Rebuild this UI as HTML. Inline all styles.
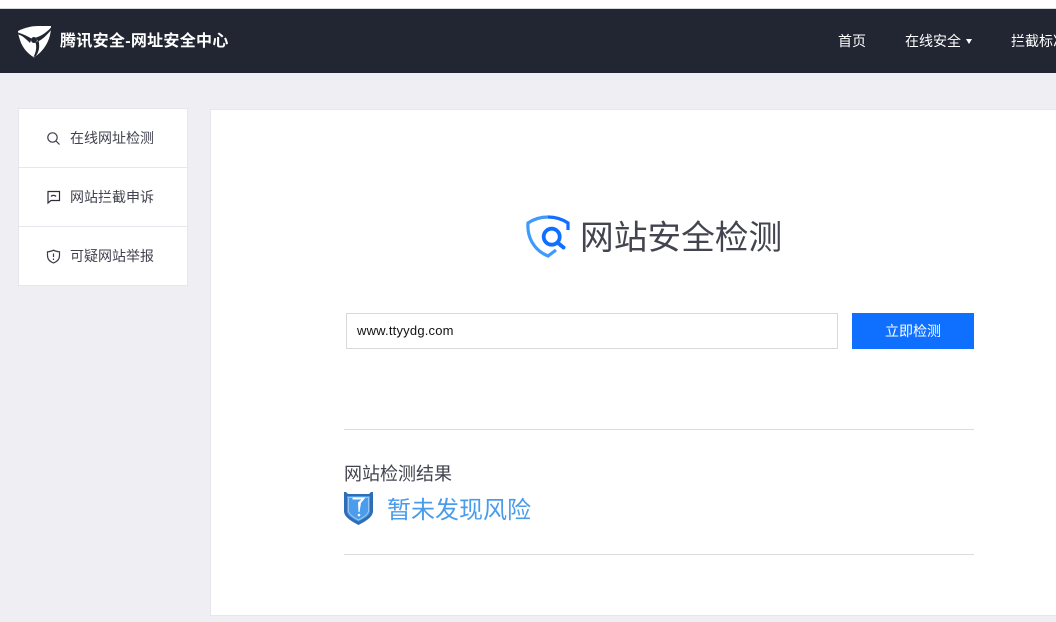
<!DOCTYPE html>
<html lang="zh-CN">
<head>
<meta charset="utf-8">
<title>腾讯安全-网址安全中心</title>
<style>
html,body{margin:0;padding:0}
body{width:1056px;height:622px;overflow:hidden;position:relative;background:#eeeef3;font-family:"Liberation Sans","Noto Sans CJK SC",sans-serif;color:#42434f}
.a{position:absolute;white-space:nowrap}
svg{position:absolute;display:block}
</style>
</head>
<body>
<div class="a" style="left:0;top:0;width:1056px;height:8px;background:#fff"></div>
<div class="a" style="left:0;top:8px;width:1056px;height:1px;background:#d8d8dc"></div>
<div class="a" style="left:0;top:9px;width:1056px;height:64px;background:#222532"></div>

<svg style="left:14px;top:22px" width="42" height="38" viewBox="0 0 42 38">
<path fill="#fff" d="M4 9C11 5.500 18 4 24 4C28 4 32 4 37 4C37 12 35 18 32 23C29 28 25 32 20 35.500C13 31 8 25 6 18C5 15 4 12 4 9Z"/>
<path fill="#222532" d="M22 15.500C27 14 32 11 37 5.500L37 8C33 13 29 17 24 19.500Z"/>
<path fill="#222532" d="M17.500 16.500C13 14 9 12 4 10.500L4.500 12.500C9 14 12 17 16 21Z"/>
<path fill="#222532" d="M21.500 20.500C23 25 22 30 19.500 35L21.500 34.500C25 30 26 25 24.500 18.500Z"/>
<circle cx="20" cy="18" r="3" fill="#222532"/>
</svg>
<div class="a" style="left:60px;top:31px;font-size:16px;line-height:22px;font-weight:700;color:#fff;letter-spacing:.3px">腾讯安全-网址安全中心</div>

<div class="a" style="left:838px;top:31px;font-size:14px;line-height:20px;color:#fff">首页</div>
<div class="a" style="left:905px;top:31px;font-size:14px;line-height:20px;color:#fff">在线安全</div>
<svg style="left:966px;top:39px" width="6" height="5" viewBox="0 0 6 5"><path fill="#fff" d="M0 0H6L3 5Z"/></svg>
<div class="a" style="left:1011px;top:31px;font-size:14px;line-height:20px;color:#fff">拦截标准</div>

<div class="a" style="left:18px;top:108px;width:168px;height:176px;background:#fff;border:1px solid #e6e6ec"></div>
<div class="a" style="left:19px;top:167px;width:168px;height:1px;background:#e6e6ec"></div>
<div class="a" style="left:19px;top:226px;width:168px;height:1px;background:#e6e6ec"></div>

<svg style="left:46px;top:131px" width="15" height="15" viewBox="0 0 15 15" fill="none" stroke="#3c3d48" stroke-width="1.200"><circle cx="6.500" cy="6.500" r="4.700"/><path d="M10 10L13.500 13.500"/></svg>
<div class="a" style="left:70px;top:128px;font-size:14px;line-height:20px">在线网址检测</div>

<svg style="left:46px;top:190px" width="15" height="15" viewBox="0 0 15 15" fill="none" stroke="#2c2d38" stroke-width="1.200"><path d="M1.500 1.500H13.500V10.500H5L2 13V1.500Z"/><path d="M5 6.500C6 5 9 5 10 6.500"/></svg>
<div class="a" style="left:70px;top:187px;font-size:14px;line-height:20px">网站拦截申诉</div>

<svg style="left:46px;top:249px" width="15" height="15" viewBox="0 0 15 15" fill="none" stroke="#3c3d48" stroke-width="1.200"><path d="M7.500 1.200C9.500 2.400 11.500 2.700 13.500 2.800V6.500C13.500 10 11 12.700 7.500 14C4 12.700 1.500 10 1.500 6.500V2.800C3.500 2.700 5.500 2.400 7.500 1.200Z"/><path d="M7.500 4.500V8M7.500 9.500V11"/></svg>
<div class="a" style="left:70px;top:246px;font-size:14px;line-height:20px">可疑网站举报</div>

<div class="a" style="left:210px;top:109px;width:846px;height:505px;background:#fff;border:1px solid #e6e6ec;border-right:0"></div>

<svg style="left:525px;top:214px" width="46" height="46" viewBox="0 0 46 46" fill="none">
<path stroke="#3f9bfb" stroke-width="3.200" d="M23 3C16 3 9 5 3 9C2 22 8 36 23 42L31 36"/>
<path stroke="#0f6fff" stroke-width="3.200" d="M23 3C30 3 37 5 43 9V16"/>
<circle cx="26.700" cy="22.700" r="8" stroke="#0f6fff" stroke-width="3.800"/>
<path stroke="#0f6fff" stroke-width="4" stroke-linecap="round" d="M33 29L38.500 33.500"/>
</svg>
<div class="a" style="left:580px;top:216px;font-size:33.700px;line-height:44px;font-weight:400;color:#43444f">网站安全检测</div>

<div class="a" style="left:346px;top:313px;width:490px;height:34px;background:#fff;border:1px solid #d9d9d9"></div>
<div class="a" style="left:357px;top:322px;font-size:13px;line-height:17px;color:#111;letter-spacing:.2px">www.ttyydg.com</div>
<div class="a" style="left:852px;top:313px;width:122px;height:36px;background:#0f70ff;color:#fff;font-size:14px;line-height:36px;text-align:center">立即检测</div>

<div class="a" style="left:344px;top:429px;width:630px;height:1px;background:#dcdcdc"></div>
<div class="a" style="left:344px;top:461px;font-size:18px;line-height:26px;color:#42434f">网站检测结果</div>

<svg style="left:344px;top:491px" width="29" height="34" viewBox="0 0 29 34">
<path fill="#2f6db5" d="M0 1H2L4 3H25L27 1H29V20C29 26 22 30 14.500 34C7 30 0 26 0 20Z"/>
<path fill="#4b9dec" d="M3 5H26V20C26 24.500 20 27.500 14.500 30.500C9 27.500 3 24.500 3 20Z"/>
<path fill="none" stroke="#a9d2f7" stroke-width=".8" d="M4.500 6.500H24.500V19.500C24.500 23.500 19.500 26.500 14.500 29C9.500 26.500 4.500 23.500 4.500 19.500Z"/>
<path fill="#fff" d="M8.500 6.500H21.500L17 12L15.500 21H14.500L14 11.500L17.500 8.500H8.500Z"/>
<circle cx="15" cy="24" r="1.300" fill="#fff"/>
</svg>
<div class="a" style="left:387px;top:493px;font-size:24px;line-height:36px;color:#4a9ceb">暂未发现风险</div>

<div class="a" style="left:344px;top:554px;width:630px;height:1px;background:#dcdcdc"></div>
</body>
</html>
